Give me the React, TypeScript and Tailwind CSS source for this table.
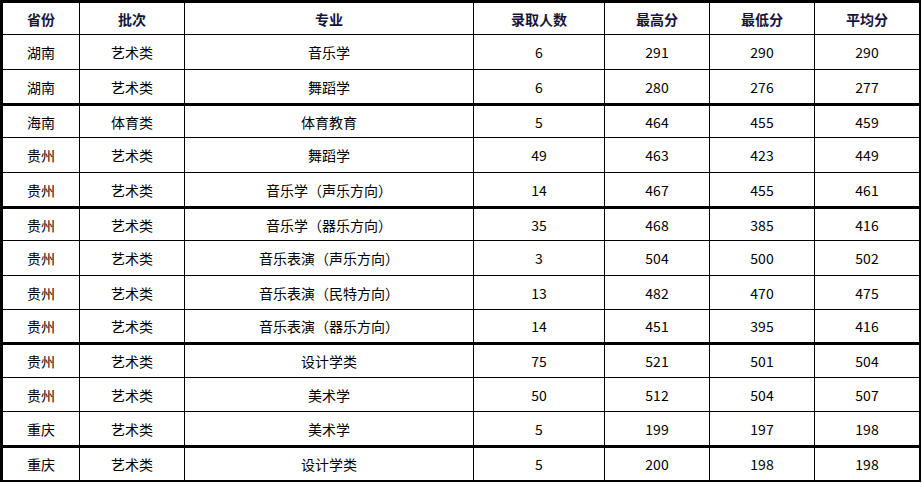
import React from "react";

type Row = { p: string; b: string; m: string; n: string; hi: string; lo: string; avg: string; h: string; thick?: boolean };

const rows: Row[] = [
  { p: "湖南", b: "艺术类", m: "音乐学", n: "6", hi: "291", lo: "290", avg: "290", h: "h-[35px]" },
  { p: "湖南", b: "艺术类", m: "舞蹈学", n: "6", hi: "280", lo: "276", avg: "277", h: "h-[36px]", thick: true },
  { p: "海南", b: "体育类", m: "体育教育", n: "5", hi: "464", lo: "455", avg: "459", h: "h-[32px]" },
  { p: "贵州", b: "艺术类", m: "舞蹈学", n: "49", hi: "463", lo: "423", avg: "449", h: "h-[35px]" },
  { p: "贵州", b: "艺术类", m: "音乐学（声乐方向）", n: "14", hi: "467", lo: "455", avg: "461", h: "h-[36px]", thick: true },
  { p: "贵州", b: "艺术类", m: "音乐学（器乐方向）", n: "35", hi: "468", lo: "385", avg: "416", h: "h-[32px]" },
  { p: "贵州", b: "艺术类", m: "音乐表演（声乐方向）", n: "3", hi: "504", lo: "500", avg: "502", h: "h-[35px]" },
  { p: "贵州", b: "艺术类", m: "音乐表演（民特方向）", n: "13", hi: "482", lo: "470", avg: "475", h: "h-[34px]" },
  { p: "贵州", b: "艺术类", m: "音乐表演（器乐方向）", n: "14", hi: "451", lo: "395", avg: "416", h: "h-[35px]", thick: true },
  { p: "贵州", b: "艺术类", m: "设计学类", n: "75", hi: "521", lo: "501", avg: "504", h: "h-[33px]" },
  { p: "贵州", b: "艺术类", m: "美术学", n: "50", hi: "512", lo: "504", avg: "507", h: "h-[34px]" },
  { p: "重庆", b: "艺术类", m: "美术学", n: "5", hi: "199", lo: "197", avg: "198", h: "h-[36px]", thick: true },
  { p: "重庆", b: "艺术类", m: "设计学类", n: "5", hi: "200", lo: "198", avg: "198", h: "h-[32px]" },
];

const widths = ["w-[77px]", "w-[105px]", "w-[289px]", "w-[131px]", "w-[105px]", "w-[105px]", "w-[104px]"];

function Cells({ vals, bold }: { vals: string[]; bold?: boolean }) {
  return (
    <>
      {vals.map((v, i) => (
        <div
          key={i}
          className={
            (i < 6 ? "border-r border-black " : "") +
            widths[i] +
            " shrink-0 flex items-center justify-center " +
            (bold ? "font-bold text-[#16143a]" : "text-black")
          }
        >
          {v}
        </div>
      ))}
    </>
  );
}

export default function App() {
  return (
    <div className="w-[922px] h-[484px] bg-white">
      <div
        className="w-[921px] border-l-[3px] border-t-[3px] border-r-2 border-b-2 border-black text-[14px] leading-none"
        style={{ fontFamily: '"Noto Sans CJK SC", "Noto Sans", sans-serif' }}
      >
        <div className="flex h-[32px] border-b border-black">
          <Cells bold vals={["省份", "批次", "专业", "录取人数", "最高分", "最低分", "平均分"]} />
        </div>
        {rows.map((r, i) => (
          <div
            key={i}
            className={
              "flex border-black " +
              r.h +
              (i === rows.length - 1 ? "" : r.thick ? " border-b-[3px]" : " border-b")
            }
          >
            <Cells vals={[r.p, r.b, r.m, r.n, r.hi, r.lo, r.avg]} />
          </div>
        ))}
      </div>
    </div>
  );
}
